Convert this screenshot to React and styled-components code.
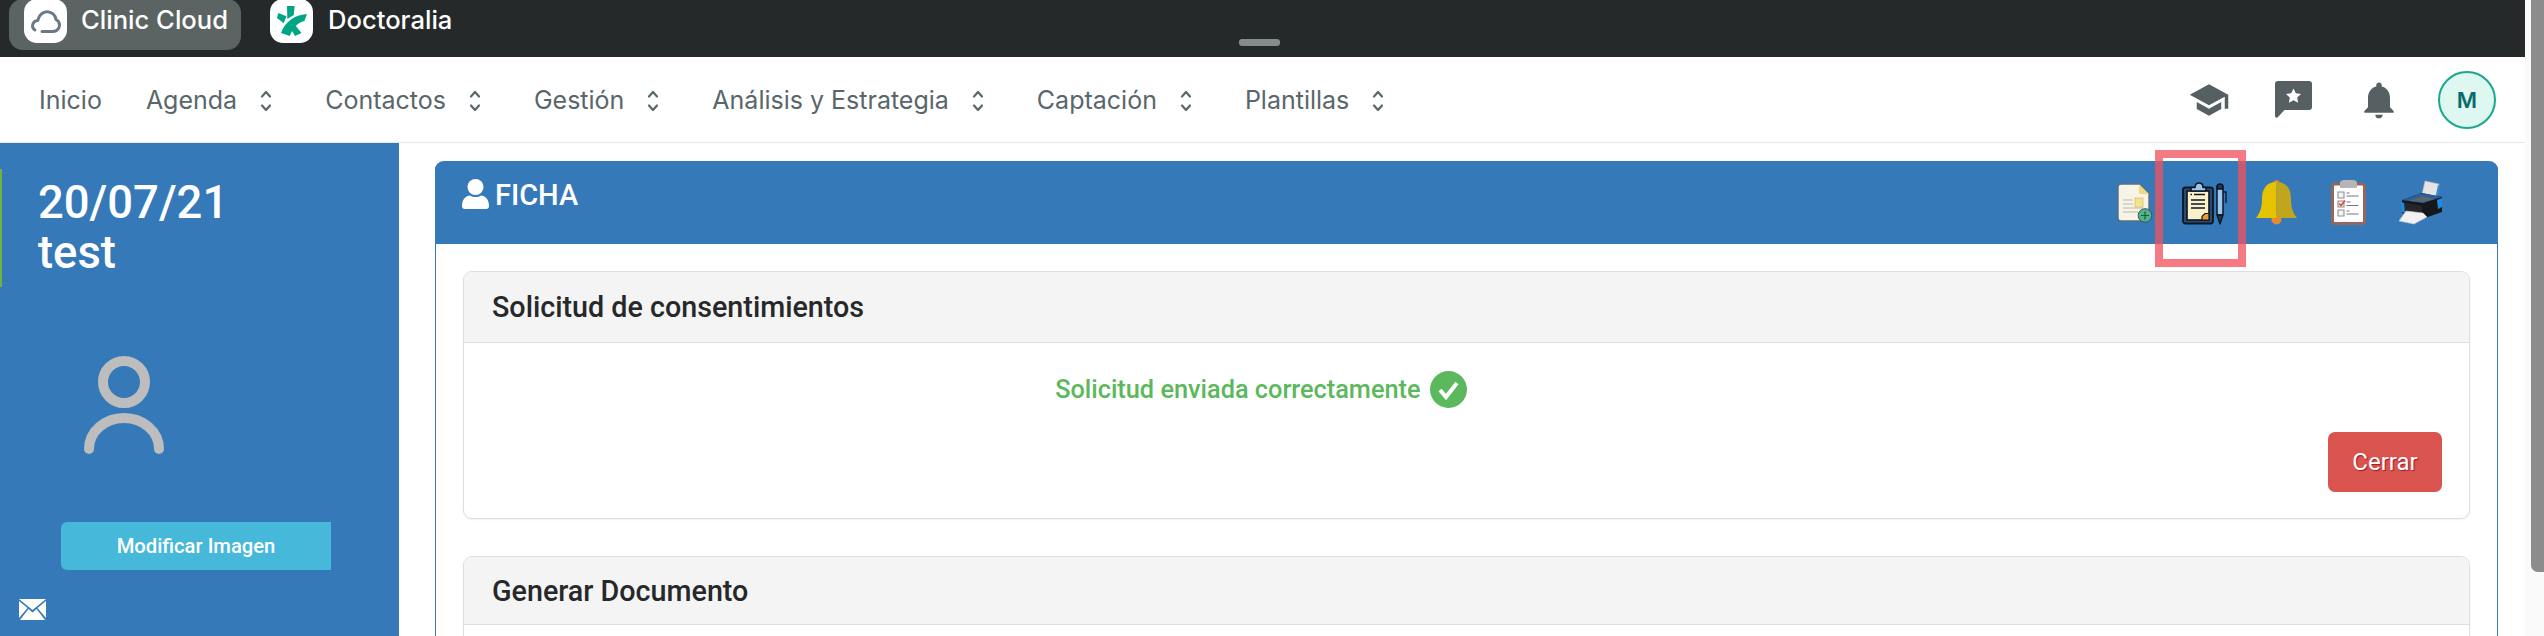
import React from 'react';
import styled, { createGlobalStyle } from 'styled-components';
import { MdSchool, MdNotifications } from 'react-icons/md';

const Global = createGlobalStyle`
  html, body { margin: 0; padding: 0; background: #fff; overflow: hidden; }
  * { box-sizing: border-box; }
`;

const Page = styled.div`
  display: flex;
  width: 2544px;
  height: 636px;
  overflow: hidden;
  position: relative;
  font-family: Roboto, "Liberation Sans", sans-serif;
`;
const Content = styled.div`
  width: 2525px;
  display: flex;
  flex-direction: column;
`;
const ScrollTrack = styled.div`
  width: 19px;
  background: #fafafa;
  display: flex;
  justify-content: flex-end;
`;
const ScrollThumb = styled.div`
  width: 13px;
  height: 572px;
  background: #8c8c8c;
  border-bottom-left-radius: 7px;
`;

const TopBar = styled.header`
  position: relative;
  height: 57px;
  flex: none;
  background: #25292a;
  display: flex;
  align-items: flex-start;
  padding-left: 9px;
  gap: 14px;
`;
const Tab = styled.div`
  height: 51px;
  margin-top: -1px;
  padding: 0 14px 0 15px;
  display: flex;
  align-items: flex-start;
  gap: ${p => p.$gap}px;
  border-radius: 14px;
  background: ${p => (p.$active ? '#5b6363' : 'transparent')};
  width: ${p => p.$w}px;
`;
const TabIcon = styled.span`
  width: 43px;
  height: 44px;
  flex: none;
  background: #fff;
  border-radius: 13px;
  display: flex;
  align-items: center;
  justify-content: center;
`;
const TabLabel = styled.span`
  font-family: Inter, sans-serif;
  font-weight: 500;
  font-size: 25.6px;
  line-height: 42px;
  color: #fff;
  white-space: nowrap;
`;
const Handle = styled.span`
  position: absolute;
  left: 1239px;
  top: 39px;
  width: 41px;
  height: 7px;
  border-radius: 3px;
  background: #858c8c;
`;

const NavBar = styled.nav`
  height: 86px;
  flex: none;
  background: #fff;
  border-bottom: 1px solid #e8e8e8;
  display: flex;
  align-items: center;
  justify-content: space-between;
  padding: 0 29px 0 39px;
`;
const Menu = styled.div`
  display: flex;
  align-items: center;
  gap: 44px;
`;
const MenuItem = styled.div`
  display: flex;
  align-items: center;
  gap: 23px;
  padding-right: ${p => (p.$chev ? 9 : 0)}px;
  font-family: Inter, sans-serif;
  font-size: 25px;
  line-height: 30px;
  color: #59666b;
  white-space: nowrap;
`;
const Chevrons = styled.svg`
  width: 12px;
  height: 22px;
  flex: none;
  margin-top: 2px;
`;
const Tools = styled.div`
  display: flex;
  align-items: center;
`;
const ToolIcon = styled.span`
  display: flex;
  color: #566062;
  font-size: ${p => p.$size}px;
  margin-left: ${p => p.$gap}px;
`;
const Avatar = styled.div`
  width: 58px;
  height: 58px;
  margin-left: ${p => p.$gap}px;
  border-radius: 50%;
  border: 2px solid #1ba88c;
  background: #def7f0;
  color: #0b6b6b;
  font-family: Inter, sans-serif;
  font-weight: 600;
  font-size: 22px;
  display: flex;
  align-items: center;
  justify-content: center;
`;

const Body = styled.div`
  flex: 1;
  min-height: 0;
  display: flex;
`;
const Sidebar = styled.aside`
  width: 399px;
  flex: none;
  background: #3579b9;
  padding-top: 26px;
  display: flex;
  flex-direction: column;
  align-items: flex-start;
`;
const Identity = styled.div`
  width: 100%;
  height: 118px;
  padding: 9px 0 0 36px;
  border-left: 2px solid #6cb33f;
  color: #fff;
  font-size: 45.4px;
  line-height: 50px;
  font-weight: 500;
`;
const AvatarArt = styled.svg`
  width: 80px;
  height: 98px;
  margin: 69px 0 0 84px;
  flex: none;
`;
const ImageButton = styled.button`
  width: 270px;
  height: 48px;
  margin: 68px 0 0 61px;
  flex: none;
  border: 0;
  padding: 0;
  border-radius: 6px 0 0 6px;
  background: #46b8da;
  color: #fff;
  font-family: Roboto, sans-serif;
  font-weight: 500;
  font-size: 20.2px;
`;
const Mail = styled.svg`
  width: 27px;
  height: 21px;
  margin: 29px 0 0 19px;
  flex: none;
`;

const Main = styled.main`
  flex: 1;
  min-width: 0;
  padding: 18px 27px 0 36px;
`;
const Panel = styled.section`
  height: 100%;
  border: solid #3579b9;
  border-width: 0 1px;
  border-radius: 9px 9px 0 0;
`;
const PanelHead = styled.div`
  height: 83px;
  margin: 0 -1px;
  background: #3579b9;
  border-radius: 9px 9px 0 0;
  display: flex;
  justify-content: space-between;
  padding: 18px 55px 0 27px;
`;
const PanelTitle = styled.div`
  display: flex;
  align-items: flex-start;
  gap: 6px;
  color: #fff;
  font-size: 29px;
  line-height: 32px;
  font-weight: 500;
`;
const HeadIcons = styled.div`
  display: flex;
  align-items: flex-start;
  padding-top: 1px;
`;
const HeadIcon = styled.svg`
  height: 45px;
  width: ${p => p.$w}px;
  margin-left: ${p => p.$gap || 0}px;
  flex: none;
`;
const PanelBody = styled.div`
  padding: 27px 27px 0;
`;
const Card = styled.div`
  border: 1px solid #dedede;
  border-radius: 9px;
  background: #fff;
  box-shadow: 0 1px 2px rgba(0, 0, 0, 0.06);
  margin-bottom: 37px;
  overflow: hidden;
`;
const CardHead = styled.div`
  height: ${p => p.$h}px;
  background: #f4f4f4;
  border-bottom: 1px solid #dedede;
  padding-left: 28px;
  display: flex;
  align-items: center;
  font-size: 28.7px;
  font-weight: 500;
  color: #26282a;
`;
const CardBody = styled.div`
  height: ${p => p.$h}px;
  display: flex;
  flex-direction: column;
`;
const Message = styled.div`
  width: 50%;
  margin-top: 28px;
  height: 37px;
  display: flex;
  align-items: center;
  justify-content: flex-end;
  gap: 9px;
  color: #5cb85c;
  font-size: 25.3px;
  font-weight: 500;
`;
const CloseButton = styled.button`
  width: 114px;
  height: 60px;
  margin: 24px 27px 0 auto;
  border: 0;
  padding: 0;
  border-radius: 7px;
  background: #d9534f;
  color: #fff;
  font-family: Roboto, sans-serif;
  font-size: 24px;
  text-shadow: 1px 1px 1px #9c1c2c;
`;
const Highlight = styled.div`
  position: absolute;
  left: 2155px;
  top: 150px;
  width: 91px;
  height: 117px;
  border: 8px solid rgba(240, 82, 92, 0.76);
  pointer-events: none;
`;

const Chev = () => (
  <Chevrons viewBox="0 0 12 22" fill="none" stroke="#59666b" strokeWidth="2.2" strokeLinecap="round" strokeLinejoin="round">
    <path d="M2 6.5 6 2l4 4.5M2 15.5 6 20l4-4.5" />
  </Chevrons>
);

const CloudLogo = () => (
  <svg width="30" height="23" viewBox="0 0 30 23" fill="none" stroke="#6b7888" strokeWidth="3" strokeLinecap="round" strokeLinejoin="round">
    <path d="M4 20C2.300 19 1.500 17.500 1.500 15.800c0-3 2.400-5.200 5.300-5.200C7.800 5 11.800 1.700 16 1.700c4.700 0 8.400 3.300 9 7.800 2 .9 3.500 2.900 3.500 5.600 0 3.600-2.800 6.400-6.300 6.400H11" />
  </svg>
);
const DoctoraliaLogo = () => (
  <svg width="30" height="30" viewBox="0 0 30 30" fill="#00a585">
    <path d="M10 0h7.600l-.8 9-6.500 4z" />
    <path d="M1.200 7 9.500 10.200l-2.800 7L0 12z" />
    <path d="M30 8 27.400 15c-6.700 1.600-11.500 6.700-14.500 15L4 27C8 16 17 9 30 8z" />
    <path d="M18.400 19.500 24.500 27l-6.500 3-4-7z" />
  </svg>
);
const ChatStar = () => (
  <svg width="37" height="37" viewBox="0 0 37 37">
    <path d="M3 0h31a3 3 0 0 1 3 3v23a3 3 0 0 1-3 3H9.500L3 36c-1 1.200-3 .6-3-1V3a3 3 0 0 1 3-3z" fill="#566062" />
    <path d="M18.500 7.500l2.300 4.800 5.200.7-3.800 3.600.9 5.200-4.600-2.500-4.600 2.500.9-5.200-3.800-3.600 5.200-.7z" fill="#fff" />
  </svg>
);

const DocIcon = () => (
  <HeadIcon $w={36} viewBox="0 0 36 45">
    <path d="M4 4h18l10 10v24a3 3 0 0 1-3 3H4a3 3 0 0 1-3-3V7a3 3 0 0 1 3-3z" fill="#f6f4e6" stroke="#5d6c7c" strokeWidth="1.4" />
    <path d="M22 4l10 10h-8a2 2 0 0 1-2-2z" fill="#f2d77b" />
    <rect x="18" y="18" width="8" height="9" fill="#f5e28f" stroke="#d9c26a" strokeWidth=".8" />
    <path d="M6 20h10M6 24h10M6 28h20M6 32h15" stroke="#b9b9a8" strokeWidth="1.2" />
    <circle cx="28" cy="35.500" r="6.800" fill="#4fb486" stroke="#35506a" strokeWidth="1" />
    <path d="M28 31.500v8M24 35.500h8" stroke="#23573f" strokeWidth="1.2" />
  </HeadIcon>
);
const ClipboardIcon = () => (
  <HeadIcon $w={45} $gap={29} viewBox="0 0 45 45">
    <rect x="1" y="7.500" width="30" height="36" rx="2.500" fill="#2e4a6e" stroke="#0b1626" strokeWidth="1.8" />
    <rect x="5" y="11" width="22" height="29" fill="#fbf1c9" stroke="#0b1626" strokeWidth="1.6" />
    <path d="M23 33.500h4V40h-7v-3.600z" fill="#ee9a2e" stroke="#0b1626" strokeWidth="1.2" />
    <path d="M8.500 14.500h1.500M12 14.500h11M9 20h14M9 24h14M9 28h14" stroke="#0b1626" strokeWidth="1.7" />
    <path d="M9 11V7.500h4c0-6 8-6 8 0h3V11z" fill="#9cc6ea" stroke="#0b1626" strokeWidth="1.6" strokeLinejoin="round" />
    <rect x="35" y="5" width="6" height="30" rx="1" fill="#9cc6ea" stroke="#0b1626" strokeWidth="1.5" />
    <path d="M35 9c0-3 1-5 3-5s3 2 3 5zM35 35l3 9 3-9z" fill="#22384f" stroke="#0b1626" strokeWidth="1.3" strokeLinejoin="round" />
    <path d="M41 12h3v11" fill="none" stroke="#0b1626" strokeWidth="1.3" />
  </HeadIcon>
);
const BellIcon = () => (
  <HeadIcon $w={41} $gap={29} viewBox="0 0 41 45">
    <circle cx="20.500" cy="39.500" r="5" fill="#e88a2e" />
    <circle cx="20.500" cy="3.200" r="3" fill="#e88a2e" />
    <path d="M20.500 2C10 2 6 9.500 6 19c0 8-1.500 13-6 19h20.500z" fill="#e6c300" />
    <path d="M20.500 2C31 2 35 9.500 35 19c0 8 1.500 13 6 19H20.500z" fill="#c0a51e" />
  </HeadIcon>
);
const ChecklistIcon = () => (
  <HeadIcon $w={35} $gap={34} viewBox="0 0 35 45">
    <rect x="1.500" y="4" width="32" height="39.500" rx="2.500" fill="#fff" stroke="#96665c" strokeWidth="3" />
    <path d="M9 5V2.500C9 1 11 0 13 0h9c2 0 4 1 4 2.500V7c0 .6-.5 1-1 1H10c-.6 0-1-.4-1-1z" fill="#b5b5b5" />
    <path d="M7 12h6v6H7zM7 21h6v6H7zM7 30h6v6H7z" fill="#f4f4f4" stroke="#8e8e8e" strokeWidth="1.100" />
    <path d="M8 23.500l2 2 4-5" fill="none" stroke="#e24a33" strokeWidth="1.700" />
    <path d="M15.500 13h3M15.500 16h12M15.500 22h4M15.500 25.500h12M15.500 31h3M15.500 34h12" stroke="#74748a" strokeWidth="1.200" />
  </HeadIcon>
);
const PrinterIcon = () => (
  <HeadIcon $w={44} $gap={33} viewBox="0 0 44 45">
    <path d="M26 1l14 3-3 18-15-3z" fill="#e4e4e4" stroke="#b9b9b9" strokeWidth=".6" />
    <path d="M39 5l2 1-3 14-2-1z" fill="#2f8fdc" />
    <path d="M3 20l20-7 20 4v15l-17 6-23-5z" fill="#15181b" />
    <path d="M3 20l20-7 20 4-19 6z" fill="#2b5f99" />
    <path d="M10 21l13-5 13 3-12 3z" fill="#5c6670" />
    <path d="M3 22l20 4v12l-20-5z" fill="#23272b" />
    <path d="M2 22l3 1 1 10-3-1zM38 20l5-2v9l-4 2z" fill="#1f8ae0" />
    <path d="M7 31l17 2 4 4-13 7-15-3z" fill="#f1f1f1" stroke="#c4c4c4" strokeWidth=".6" />
  </HeadIcon>
);

export default function App() {
  const menu = [
    ['Inicio', false],
    ['Agenda', true],
    ['Contactos', true],
    ['Gestión', true],
    ['Análisis y Estrategia', true],
    ['Captación', true],
    ['Plantillas', true],
  ];
  return (
    <Page>
      <Global />
      <Content>
        <TopBar>
          <Tab $active $w={232} $gap={14}>
            <TabIcon><CloudLogo /></TabIcon>
            <TabLabel>Clinic Cloud</TabLabel>
          </Tab>
          <Tab $w={240} $gap={15}>
            <TabIcon><DoctoraliaLogo /></TabIcon>
            <TabLabel>Doctoralia</TabLabel>
          </Tab>
          <Handle />
        </TopBar>
        <NavBar>
          <Menu>
            {menu.map(([label, chev]) => (
              <MenuItem key={label} $chev={chev}>
                {label}
                {chev && <Chev />}
              </MenuItem>
            ))}
          </Menu>
          <Tools>
            <ToolIcon $size={42} $gap={0}><MdSchool /></ToolIcon>
            <ToolIcon $size={37} $gap={45}><ChatStar /></ToolIcon>
            <ToolIcon $size={44} $gap={45}><MdNotifications /></ToolIcon>
            <Avatar $gap={37}>M</Avatar>
          </Tools>
        </NavBar>
        <Body>
          <Sidebar>
            <Identity>
              20/07/21
              <br />
              test
            </Identity>
            <AvatarArt viewBox="0 0 80 98" fill="none" stroke="#bdbdbd" strokeWidth="10" strokeLinecap="round">
              <circle cx="40" cy="26" r="21" />
              <path d="M5 93A35 31 0 0 1 75 93" />
            </AvatarArt>
            <ImageButton>Modificar Imagen</ImageButton>
            <Mail viewBox="0 0 27 21">
              <path d="M0 0h27L13.500 11z" fill="#fff" />
              <path d="M0 2v17l8.500-10zM27 2v17l-8.500-10z" fill="#fff" />
              <path d="M1 21h25l-8.500-11-4 3.500-4-3.500z" fill="#fff" />
            </Mail>
          </Sidebar>
          <Main>
            <Panel>
              <PanelHead>
                <PanelTitle>
                  <svg width="27" height="30" viewBox="0 0 27 30" fill="#fff">
                    <circle cx="13.500" cy="8" r="8" />
                    <path d="M0 27c0-7 4-10 8-10.500 3 2 8 2 11 0 4 .5 8 3.500 8 10.500 0 2-1 3-3 3H3c-2 0-3-1-3-3z" />
                  </svg>
                  FICHA
                </PanelTitle>
                <HeadIcons>
                  <DocIcon />
                  <ClipboardIcon />
                  <BellIcon />
                  <ChecklistIcon />
                  <PrinterIcon />
                </HeadIcons>
              </PanelHead>
              <PanelBody>
                <Card>
                  <CardHead $h={71}>Solicitud de consentimientos</CardHead>
                  <CardBody $h={175}>
                    <Message>
                      Solicitud enviada correctamente
                      <svg width="37" height="37" viewBox="0 0 37 37">
                        <circle cx="18.500" cy="18.500" r="18.500" fill="#5cb85c" />
                        <path d="M10 19l6 7 11-14" fill="none" stroke="#fff" strokeWidth="4" />
                      </svg>
                    </Message>
                    <CloseButton>Cerrar</CloseButton>
                  </CardBody>
                </Card>
                <Card>
                  <CardHead $h={68}>Generar Documento</CardHead>
                  <CardBody $h={120} />
                </Card>
              </PanelBody>
            </Panel>
          </Main>
        </Body>
      </Content>
      <ScrollTrack><ScrollThumb /></ScrollTrack>
      <Highlight />
    </Page>
  );
}
